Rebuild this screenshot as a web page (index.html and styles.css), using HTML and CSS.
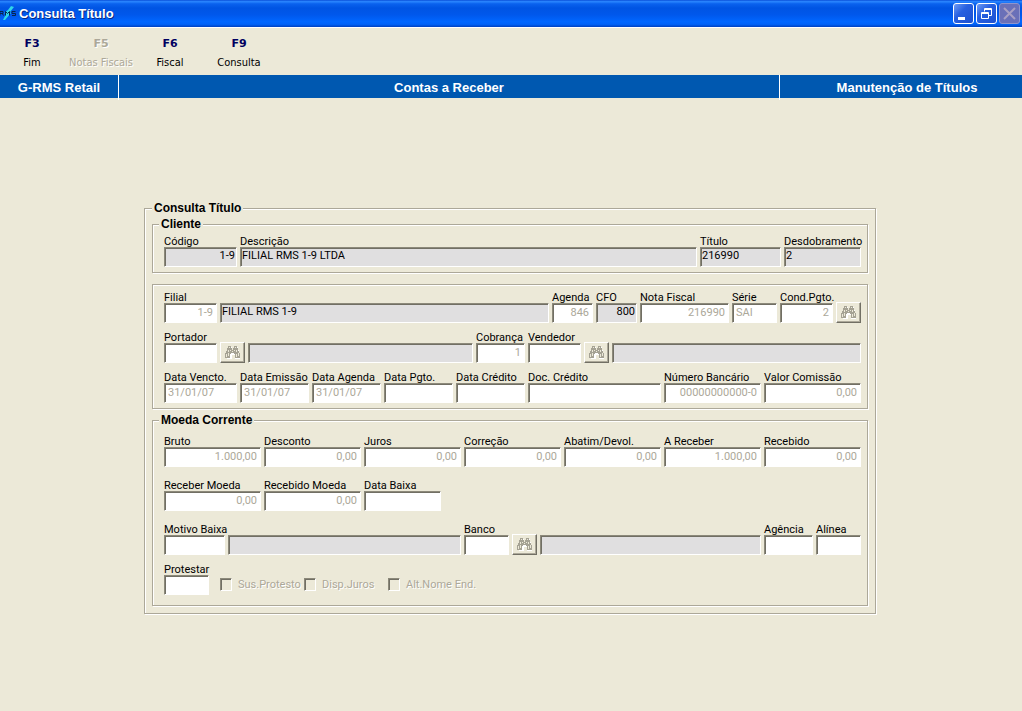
FILE: index.html
```html
<!DOCTYPE html>
<html lang="pt-BR">
<head>
<meta charset="utf-8">
<meta name="viewport" content="width=device-width, initial-scale=1">
<title>Consulta Título</title>
<link rel="stylesheet" href="styles.css">
</head>
<body>
<svg class="defs" aria-hidden="true">
  <symbol id="binoculars" viewBox="0 0 17 15">
    <path fill="#fff" d="M5 2h3v3h3V2h3v3h1v3h1v6h-5v-4H8v4H3V8h1V5h1z"/>
    <path fill="#a5a294" d="M4 1h3v2h1v2h1V3h1V1h3v2h1v3h1v2h1v5h-5V9h-1V8H7v1H6v4H1V8h1V6h1V3h1z"/>
    <path fill="#ece9d8" d="M5 2h1v1H5zM11 2h1v1h-1zM4 5h1v2H4zM6 5h1v1H6zM10 5h1v1h-1zM12 5h1v2h-1zM8 6h1v1H8zM2 9h1v3H2zM4 8h1v3H4zM12 9h1v3h-1zM14 8h1v3h-1z"/>
  </symbol>
</svg>

<header class="titlebar">
  <svg class="logo" width="16" height="16" viewBox="0 0 16 16" aria-hidden="true">
    <path d="M11 1l3 1-4 5 1 1-6 7H3l3-6-2-1 4-3z" fill="#2fd6e8"/>
    <path d="M0 10.500V6.500h3v2H0M2 8l1.500 2.500M5.500 10.500v-4l2 2 2-2v4M15.500 6.500H12v2h3.500v2H12" fill="none" stroke="#06264f"/>
  </svg>
  <h1 class="title">Consulta Título</h1>
  <div class="window-buttons">
    <button class="winbtn" aria-label="Minimizar"><svg viewBox="0 0 21 21"><path d="M5 14h7v3H5z" fill="#fff"/></svg></button>
    <button class="winbtn" aria-label="Restaurar"><svg viewBox="0 0 21 21"><path d="M8 8V5h7v7h-3M8 6h7M5 9h7v6H5zM5 10h7" transform="translate(.5 .5)" fill="none" stroke="#fff"/></svg></button>
    <button class="winbtn winbtn-off" aria-label="Fechar" disabled><svg viewBox="0 0 21 21"><path d="M5 5l11 11M16 5L5 16" fill="none" stroke="#a9a0c4" stroke-width="2"/></svg></button>
  </div>
</header>

<nav class="toolbar">
  <button class="tool"><b>F3</b><span>Fim</span></button>
  <button class="tool" disabled><b>F5</b><span>Notas Fiscais</span></button>
  <button class="tool"><b>F6</b><span>Fiscal</span></button>
  <button class="tool"><b>F9</b><span>Consulta</span></button>
</nav>

<div class="banner">
  <div class="banner-cell">G-RMS Retail</div>
  <div class="banner-cell">Contas a Receber</div>
  <div class="banner-cell">Manutenção de Títulos</div>
</div>

<main class="content">
  <form class="form">
  <fieldset class="group outer">
    <legend>Consulta Título</legend>

    <fieldset class="group client">
      <legend>Cliente</legend>
      <div class="row row-client">
        <div class="field"><label for="codigo">Código</label><input id="codigo" class="locked num" value="1-9" readonly></div>
        <div class="field"><label for="descricao">Descrição</label><input id="descricao" class="locked" value="FILIAL RMS 1-9 LTDA" readonly></div>
        <div class="field"><label for="titulo">Título</label><input id="titulo" class="locked" value="216990" readonly></div>
        <div class="field"><label for="desdobramento">Desdobramento</label><input id="desdobramento" class="locked" value="2" readonly></div>
      </div>
    </fieldset>

    <div class="group details">
      <div class="row row-branch">
        <div class="field"><label for="filial">Filial</label><input id="filial" class="num" value="1-9"></div>
        <div class="field"><input class="locked" value="FILIAL RMS 1-9" aria-label="Nome da filial" readonly></div>
        <div class="field"><label for="agenda">Agenda</label><input id="agenda" class="num" value="846"></div>
        <div class="field"><label for="cfo">CFO</label><input id="cfo" class="locked num" value="800" readonly></div>
        <div class="field"><label for="nota">Nota Fiscal</label><input id="nota" class="num" value="216990"></div>
        <div class="field"><label for="serie">Série</label><input id="serie" value="SAI"></div>
        <div class="field"><label for="cond">Cond.Pgto.</label><input id="cond" class="num" value="2"></div>
        <button type="button" class="search" aria-label="Buscar condição" disabled><svg width="17" height="15"><use href="#binoculars"/></svg></button>
      </div>
      <div class="row row-carrier">
        <div class="field"><label for="portador">Portador</label><input id="portador"></div>
        <button type="button" class="search" aria-label="Buscar portador" disabled><svg width="17" height="15"><use href="#binoculars"/></svg></button>
        <div class="field"><input class="locked" aria-label="Nome do portador" readonly></div>
        <div class="field"><label for="cobranca">Cobrança</label><input id="cobranca" class="num" value="1"></div>
        <div class="field"><label for="vendedor">Vendedor</label><input id="vendedor"></div>
        <button type="button" class="search" aria-label="Buscar vendedor" disabled><svg width="17" height="15"><use href="#binoculars"/></svg></button>
        <div class="field"><input class="locked" aria-label="Nome do vendedor" readonly></div>
      </div>
      <div class="row row-dates">
        <div class="field"><label for="vencto">Data Vencto.</label><input id="vencto" value="31/01/07"></div>
        <div class="field"><label for="emissao">Data Emissão</label><input id="emissao" value="31/01/07"></div>
        <div class="field"><label for="dagenda">Data Agenda</label><input id="dagenda" value="31/01/07"></div>
        <div class="field"><label for="pgto">Data Pgto.</label><input id="pgto"></div>
        <div class="field"><label for="dcredito">Data Crédito</label><input id="dcredito"></div>
        <div class="field"><label for="doc">Doc. Crédito</label><input id="doc"></div>
        <div class="field"><label for="numero">Número Bancário</label><input id="numero" class="num" value="00000000000-0"></div>
        <div class="field"><label for="comissao">Valor Comissão</label><input id="comissao" class="num" value="0,00"></div>
      </div>
    </div>

    <fieldset class="group currency">
      <legend>Moeda Corrente</legend>
      <div class="row row-amounts">
        <div class="field"><label for="bruto">Bruto</label><input id="bruto" class="num" value="1.000,00"></div>
        <div class="field"><label for="desconto">Desconto</label><input id="desconto" class="num" value="0,00"></div>
        <div class="field"><label for="juros">Juros</label><input id="juros" class="num" value="0,00"></div>
        <div class="field"><label for="correcao">Correção</label><input id="correcao" class="num" value="0,00"></div>
        <div class="field"><label for="abatim">Abatim/Devol.</label><input id="abatim" class="num" value="0,00"></div>
        <div class="field"><label for="areceber">A Receber</label><input id="areceber" class="num" value="1.000,00"></div>
        <div class="field"><label for="recebido">Recebido</label><input id="recebido" class="num" value="0,00"></div>
      </div>
      <div class="row row-received">
        <div class="field"><label for="rmoeda">Receber Moeda</label><input id="rmoeda" class="num" value="0,00"></div>
        <div class="field"><label for="rdmoeda">Recebido Moeda</label><input id="rdmoeda" class="num" value="0,00"></div>
        <div class="field"><label for="baixa">Data Baixa</label><input id="baixa"></div>
      </div>
      <div class="row row-bank">
        <div class="field"><label for="motivo">Motivo Baixa</label><input id="motivo"></div>
        <div class="field"><input class="locked" aria-label="Descrição do motivo" readonly></div>
        <div class="field"><label for="banco">Banco</label><input id="banco"></div>
        <button type="button" class="search" aria-label="Buscar banco" disabled><svg width="17" height="15"><use href="#binoculars"/></svg></button>
        <div class="field"><input class="locked" aria-label="Nome do banco" readonly></div>
        <div class="field"><label for="agencia">Agência</label><input id="agencia"></div>
        <div class="field"><label for="alinea">Alínea</label><input id="alinea"></div>
      </div>
      <div class="row row-protest">
        <div class="field"><label for="protestar">Protestar</label><input id="protestar"></div>
        <div class="checks">
          <label class="check"><input type="checkbox" disabled>Sus.Protesto</label>
          <label class="check"><input type="checkbox" disabled>Disp.Juros</label>
          <label class="check"><input type="checkbox" disabled>Alt.Nome End.</label>
        </div>
      </div>
    </fieldset>
  </fieldset>
  </form>
</main>
</body>
</html>
```

FILE: styles.css
```css
* { box-sizing: border-box; }

body {
  margin: 0;
  min-height: 100vh;
  display: flex;
  flex-direction: column;
  background: #ece9d8;
  color: #000;
  font: 11px/12px Roboto, "Liberation Sans", sans-serif;
}

button { font: inherit; color: inherit; }

.defs { position: absolute; width: 0; height: 0; }

/* Title bar */
.titlebar {
  display: flex;
  align-items: center;
  height: 27px;
  padding: 0 2px 1px 0;
  gap: 3px;
  background: linear-gradient(#0a4fd8 0, #2a86ff 6%, #0a62ee 14%, #0054e3 30%, #0058ec 55%, #0066ff 80%, #0062f8 90%, #0040c0 100%);
}

.title {
  flex: 1;
  margin: 0;
  padding-top: 2px;
  color: #fff;
  font: bold 13px/16px "Liberation Sans", sans-serif;
  text-shadow: 1px 1px 0 #0a2a80;
}

.window-buttons { display: flex; gap: 2px; }

.winbtn {
  width: 21px;
  height: 21px;
  padding: 0;
  border: 1px solid #fff;
  border-radius: 3px;
  background: linear-gradient(135deg, #6f9cf5, #2860e0 40%, #1c50d0);
  overflow: hidden;
}

.winbtn svg { display: block; width: 21px; height: 21px; margin: -1px; }

.winbtn-off { border-color: #8f94cc; background: #6a70b8; }

/* Toolbar */
.toolbar {
  display: flex;
  gap: 5px;
  padding-top: 9px;
  height: 48px;
  border-top: 1px solid #fff;
}

.tool {
  display: flex;
  flex-direction: column;
  align-items: center;
  gap: 5px;
  width: 64px;
  height: 36px;
  padding: 0;
  border: 0;
  background: none;
  font: 11px/14px "DejaVu Sans Condensed", "DejaVu Sans", sans-serif;
  white-space: nowrap;
}

.tool b { font-family: "DejaVu Sans", sans-serif; color: #000060; }
.tool:disabled, .tool:disabled b { color: #aca899; text-shadow: 1px 1px 0 #fff; }

/* Blue module banner */
.banner {
  display: grid;
  grid-template-columns: 119px 1fr 242px;
  height: 23px;
  background: #0058b0;
}

.banner-cell {
  padding-top: 1px;
  color: #fff;
  font: bold 13px/24px "Liberation Sans", sans-serif;
  text-align: center;
  border-right: 1px solid #fff;
}

.banner-cell:last-child { border-right: 0; padding-left: 12px; }

/* Form */
.content {
  flex: 1;
  display: flex;
  align-items: center;
  justify-content: center;
  padding: 7px 10px 0 8px;
}

.form { width: 100%; max-width: 732px; }

.group {
  margin: 0;
  min-width: 0;
  border: 1px solid #aca899;
  box-shadow: 1px 1px 0 #fff, inset 1px 1px 0 #fff;
}

.group legend {
  padding: 0 2px;
  background: #ece9d8;
  font: bold 12px/13px "Liberation Sans", sans-serif;
}

.outer { padding: 3px 7px 7px; }
.client { padding: 4px 6px 5px; }
.details { margin-top: 11px; padding: 6px 6px 5px 11px; }
.currency { margin-top: 5px; padding: 8px 6px 10px; }
.client .row, .currency .row { padding-left: 5px; }

.row {
  display: grid;
  column-gap: 3px;
  align-items: end;
}

.row + .row { margin-top: 8px; }
.currency .row-received, .currency .row-bank { margin-top: 12px; }

.row-client { grid-template-columns: 73px 1fr 81px 77px; }
.row-branch { grid-template-columns: 53px 1fr 41px 41px 89px 45px 53px 25px; }
.row-carrier { grid-template-columns: 53px 25px 225fr 49px 53px 25px 249fr; }
.row-dates { grid-template-columns: 73px 69px 69px 69px 69px 1fr 97px 97px; }
.row-amounts { grid-template-columns: repeat(7, 1fr); }
.row-received { grid-template-columns: 97px 97px 77px; }
.row-bank { grid-template-columns: 61px 233fr 45px 25px 221fr 49px 45px; }
.row-protest { grid-template-columns: 45px 1fr; }

.field { display: flex; flex-direction: column; min-width: 0; }
.field label { height: 12px; line-height: 14px; white-space: nowrap; }

.field input {
  width: 100%;
  min-width: 0;
  height: 20px;
  padding: 0 3px 1px;
  border: 1px solid;
  border-color: #8c897a #fff #fff #8c897a;
  border-radius: 0;
  outline: 0;
  background: #fff;
  box-shadow: inset 1px 1px 0 #716f64;
  color: #aca899;
  font: inherit;
}

.field .locked { padding: 0 1px 3px; background: #e0dfe0; color: #000; }
.field .num { text-align: right; }

.search {
  display: flex;
  align-items: center;
  justify-content: center;
  height: 21px;
  padding: 0;
  border: 1px solid;
  border-color: #fff #716f64 #716f64 #fff;
  background: #ece9d8;
  box-shadow: inset -1px -1px 0 #aca899;
}

.search svg { shape-rendering: crispEdges; }

.checks { display: flex; padding: 0 0 4px 8px; }

.check {
  display: flex;
  align-items: center;
  gap: 6px;
  width: 84px;
  color: #aca899;
  text-shadow: 1px 1px 0 #fff;
  white-space: nowrap;
}

.check input {
  appearance: none;
  flex: none;
  width: 12px;
  height: 13px;
  margin: 0;
  border: 1px solid;
  border-color: #8c897a #fff #fff #8c897a;
  box-shadow: inset 1px 1px 0 #716f64;
}
```
